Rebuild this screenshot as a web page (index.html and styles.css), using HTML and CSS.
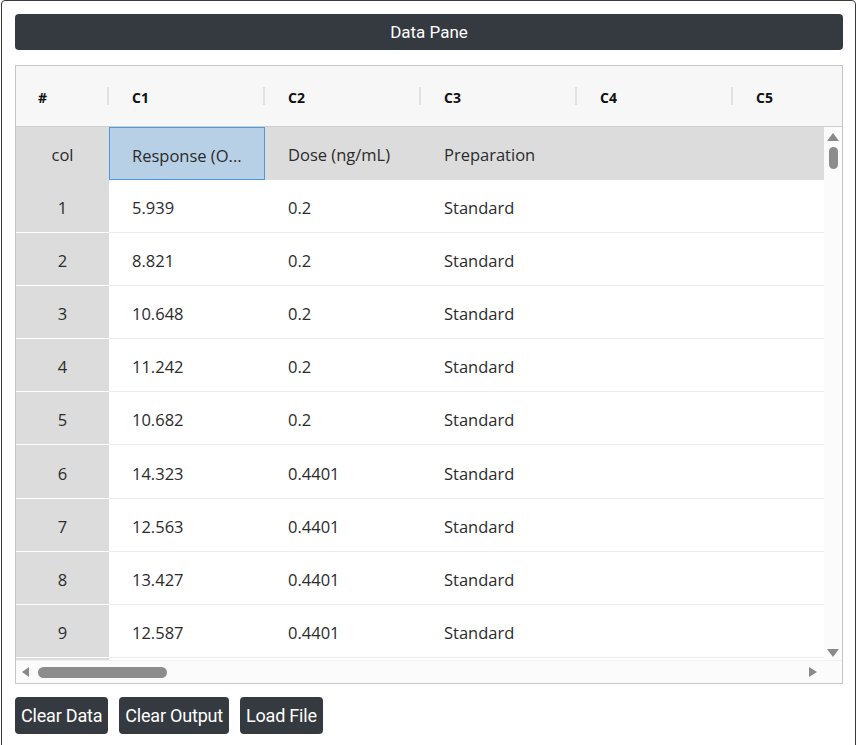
FILE: index.html
```html
<!DOCTYPE html>
<html>
<head>
<meta charset="utf-8">
<link rel="stylesheet" href="styles.css">
</head>
<body>
<div class="frame">
  <div class="pane-title">Data Pane</div>
  <div class="grid">
    <div class="ghead">
      <div class="hc hc-idx">#</div>
      <div class="hc">C1</div>
      <div class="hc">C2</div>
      <div class="hc">C3</div>
      <div class="hc">C4</div>
      <div class="hc hc-last">C5</div>
    </div>
    <div class="gbody">
      <div class="rows">
        <div class="row row-names">
          <div class="c c-idx">col</div>
          <div class="c c-sel">Response (O...</div>
          <div class="c">Dose (ng/mL)</div>
          <div class="c">Preparation</div>
          <div class="c"></div>
          <div class="c"></div>
        </div>
        <div class="row"><div class="c c-idx">1</div><div class="c">5.939</div><div class="c">0.2</div><div class="c">Standard</div><div class="c"></div><div class="c"></div></div>
        <div class="row"><div class="c c-idx">2</div><div class="c">8.821</div><div class="c">0.2</div><div class="c">Standard</div><div class="c"></div><div class="c"></div></div>
        <div class="row"><div class="c c-idx">3</div><div class="c">10.648</div><div class="c">0.2</div><div class="c">Standard</div><div class="c"></div><div class="c"></div></div>
        <div class="row"><div class="c c-idx">4</div><div class="c">11.242</div><div class="c">0.2</div><div class="c">Standard</div><div class="c"></div><div class="c"></div></div>
        <div class="row"><div class="c c-idx">5</div><div class="c">10.682</div><div class="c">0.2</div><div class="c">Standard</div><div class="c"></div><div class="c"></div></div>
        <div class="row"><div class="c c-idx">6</div><div class="c">14.323</div><div class="c">0.4401</div><div class="c">Standard</div><div class="c"></div><div class="c"></div></div>
        <div class="row"><div class="c c-idx">7</div><div class="c">12.563</div><div class="c">0.4401</div><div class="c">Standard</div><div class="c"></div><div class="c"></div></div>
        <div class="row"><div class="c c-idx">8</div><div class="c">13.427</div><div class="c">0.4401</div><div class="c">Standard</div><div class="c"></div><div class="c"></div></div>
        <div class="row"><div class="c c-idx">9</div><div class="c">12.587</div><div class="c">0.4401</div><div class="c">Standard</div><div class="c"></div><div class="c"></div></div>
        <div class="row"><div class="c c-idx"></div><div class="c"></div><div class="c"></div><div class="c"></div><div class="c"></div><div class="c"></div></div>
      </div>
      <div class="vscroll">
        <div class="arr arr-up"></div>
        <div class="vthumb"></div>
        <div class="vspace"></div>
        <div class="arr arr-down"></div>
      </div>
    </div>
    <div class="hscroll">
      <div class="arr arr-left"></div>
      <div class="hthumb"></div>
      <div class="hspace"></div>
      <div class="arr arr-right"></div>
    </div>
  </div>
  <div class="actions">
    <button class="btn">Clear Data</button>
    <button class="btn">Clear Output</button>
    <button class="btn">Load File</button>
  </div>
</div>
</body>
</html>
```
FILE: styles.css
```css
html, body {
  margin: 0;
  padding: 0;
  background: #ffffff;
  overflow: hidden;
}
body {
  font-family: "Open Sans", "Segoe UI", sans-serif;
  color: #212529;
}
.frame {
  margin-left: 1px;
  border: 1px solid #3a3a3a;
  border-radius: 4px;
  padding: 13px 12px 20px 13px;
  height: 780px;
  box-sizing: border-box;
}
.pane-title {
  background: #343a40;
  color: #ffffff;
  border-radius: 4px;
  height: 36px;
  display: flex;
  align-items: center;
  justify-content: center;
  font-family: Roboto, "Liberation Sans", sans-serif;
  font-size: 17px;
}
.grid {
  margin-top: 15px;
  border: 1px solid #c6c6c6;
  height: 619px;
  box-sizing: border-box;
  display: flex;
  flex-direction: column;
  overflow: hidden;
}
.ghead {
  flex: 0 0 60px;
  background: #f7f7f7;
  border-bottom: 1px solid #cfcfcf;
  display: flex;
  align-items: center;
  overflow: hidden;
}
.hc {
  flex: 0 0 155px;
  height: 18px;
  line-height: 18px;
  padding-top: 2px;
  border-right: 2px solid #e2e2e2;
  padding-left: 22px;
  box-sizing: border-box;
  font-weight: 700;
  font-size: 14px;
  color: #111;
}
.hc-idx {
  flex-basis: 93px;
  padding-left: 22px;
  margin-right: 1px;
  width: 93px;
}
.hc + .hc { margin-left: 1px; }
.hc-idx + .hc { margin-left: 0; }
.hc-last { border-right: none; }
.gbody {
  flex: 1;
  display: flex;
  min-height: 0;
}
.rows {
  flex: 1;
  overflow: hidden;
  min-width: 0;
}
.row {
  display: flex;
  height: 53.1px;
  width: 873px;
}
.row-names { height: 53px; }
.c {
  flex: 0 0 156px;
  box-sizing: border-box;
  padding-left: 23px;
  padding-top: 3px;
  display: flex;
  align-items: center;
  font-size: 16.5px;
  color: #2b2b2b;
  background: #ffffff;
  border-bottom: 1px solid #ececec;
  white-space: nowrap;
}
.c.c-idx {
  flex-basis: 93px;
  padding-left: 0;
  justify-content: center;
  background: #dcdcdc;
  border-bottom: 1px solid #ffffff;
}
.row-names .c {
  background: #dcdcdc;
  border-bottom: 1px solid #dcdcdc;
}
.row-names .c.c-sel {
  background: #b8d0e5;
  border: 1px solid #4a9ae0;
  padding-left: 22px;
}
.vscroll {
  flex: 0 0 18px;
  background: #fbfbfb;
  display: flex;
  flex-direction: column;
  align-items: center;
}
.vthumb {
  width: 9px;
  height: 22px;
  border-radius: 5px;
  background: #8c8c8c;
  margin-top: 6px;
}
.vspace, .hspace { flex: 1; }
.arr {
  width: 0;
  height: 0;
  border-style: solid;
  border-color: transparent;
}
.arr-up {
  margin-top: 6px;
  border-width: 0 6px 8px 6px;
  border-bottom-color: #8a8a8a;
}
.arr-down {
  margin-bottom: 3px;
  border-width: 8px 6px 0 6px;
  border-top-color: #8a8a8a;
}
.hscroll {
  flex: 0 0 22px;
  background: #fbfbfb;
  border-top: 1px solid #f0f0f0;
  display: flex;
  align-items: center;
}
.arr-left {
  margin-left: 6px;
  border-width: 5px 7px 5px 0;
  border-right-color: #8a8a8a;
}
.arr-right {
  margin-right: 25px;
  border-width: 5px 0 5px 8px;
  border-left-color: #8a8a8a;
}
.hthumb {
  width: 129px;
  height: 11px;
  border-radius: 6px;
  background: #8c8c8c;
  margin-left: 9px;
}
.actions {
  margin-top: 13px;
  display: flex;
  gap: 11px;
}
.btn {
  background: #343a40;
  color: #ffffff;
  border: none;
  border-radius: 4px;
  height: 37px;
  padding: 0 6px;
  font-family: Roboto, "Liberation Sans", sans-serif;
  font-size: 18px;
  letter-spacing: -0.2px;
}
```
